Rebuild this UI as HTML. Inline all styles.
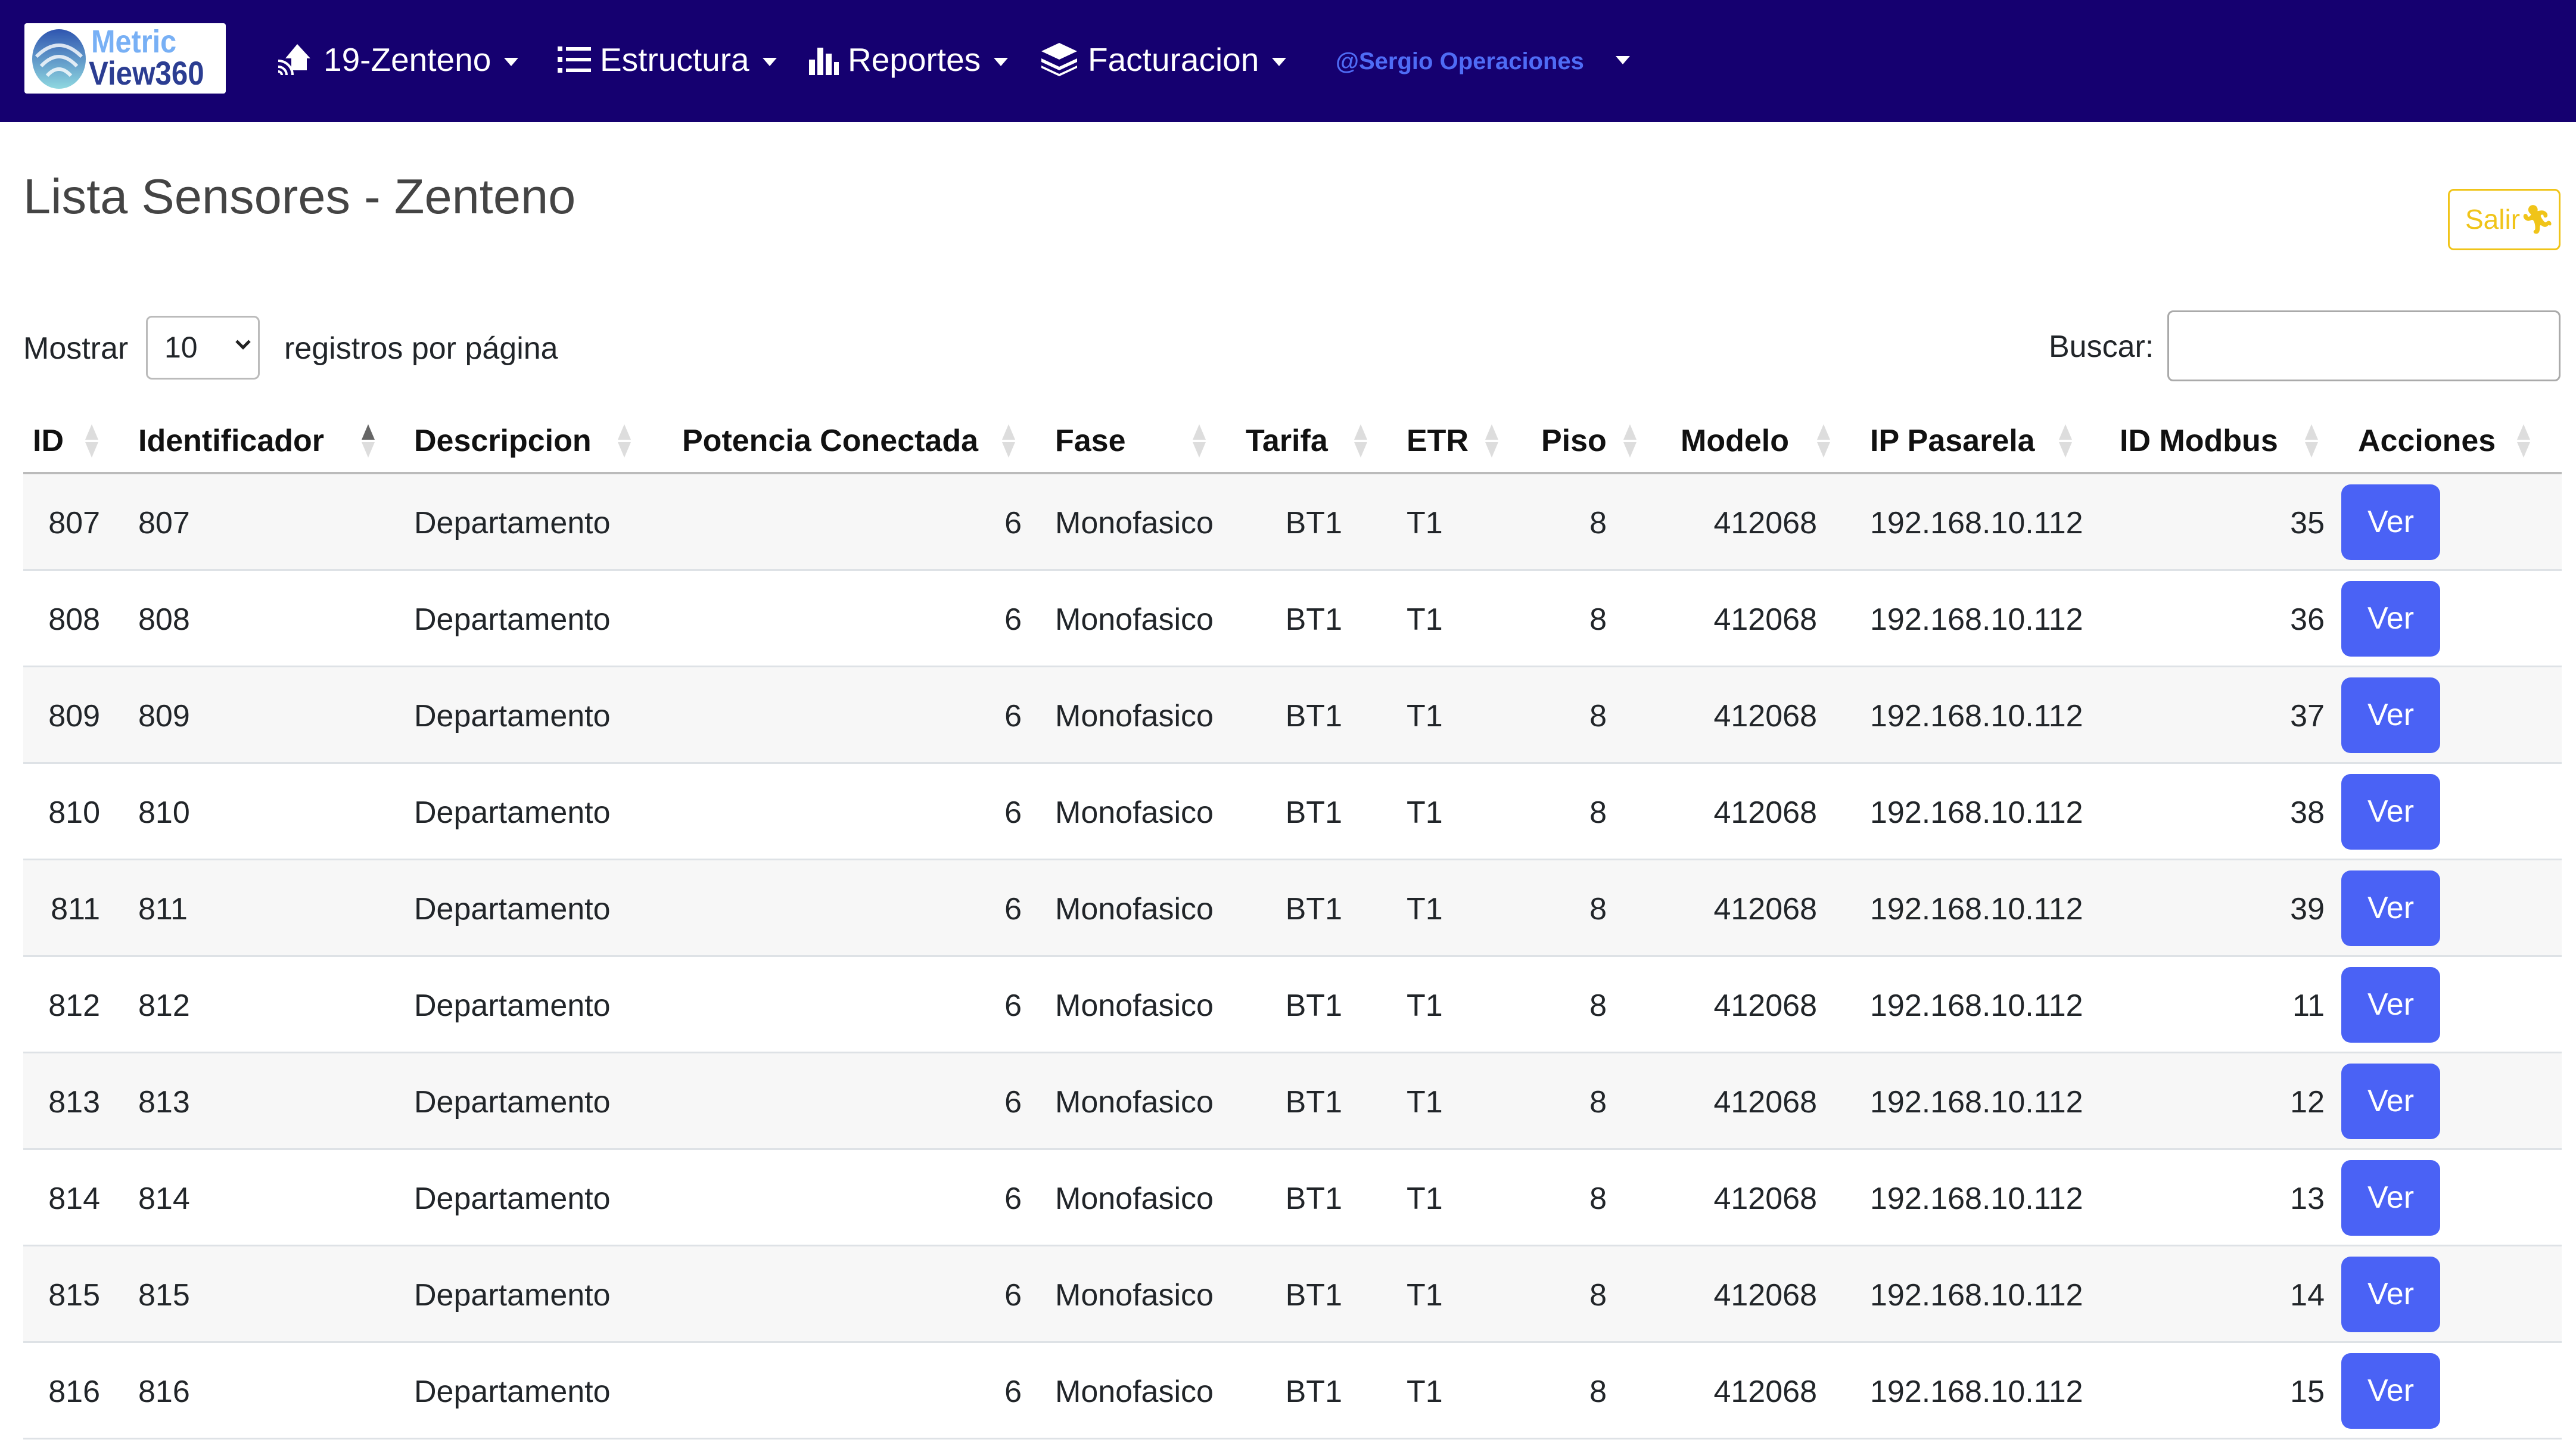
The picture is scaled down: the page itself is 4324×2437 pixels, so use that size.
<!DOCTYPE html>
<html><head><meta charset="utf-8"><style>
*{margin:0;padding:0;box-sizing:border-box}
body{width:4324px;height:2437px;background:#fff;font-family:"Liberation Sans",sans-serif;color:#212529;position:relative;overflow:hidden}
.nav{position:absolute;left:0;top:0;width:4324px;height:205px;background:#150070}
.abs{position:absolute;white-space:nowrap}
.ni{position:absolute;top:70px;color:#fff;font-size:55px;line-height:60px;white-space:nowrap}
.car{display:inline-block;width:0;height:0;border-left:12px solid transparent;border-right:12px solid transparent;border-top:14px solid #fff;vertical-align:middle;margin-left:22px}
.hd{position:absolute;top:710px;font-weight:bold;font-size:52px;line-height:60px;color:#111}
.so{position:absolute;top:712px;width:22px;height:56px}
.row{position:absolute;left:39px;width:4261px;height:162px;border-bottom:3px solid #dee2e6}
.row span{position:absolute;top:52px;font-size:52px;line-height:60px;white-space:nowrap}
.r{text-align:right}
.a{right:4132px}.b{right:2585px}.c{right:2047px}.d{right:1603px}.e{right:1250px}.f{right:398px}
.ver{position:absolute;left:3891px;top:17px;width:166px;height:127px;background:#4a62f5;border-radius:16px;color:#fff;font-size:52px;line-height:127px;text-align:center}
</style></head><body>
<div class="nav">
  <div class="abs" style="left:41px;top:39px;width:338px;height:118px;background:#fff;border-radius:4px">
    <svg width="100" height="104" style="position:absolute;left:8px;top:8px" viewBox="0 0 100 104">
      <defs><linearGradient id="g" x1="0" y1="0" x2="0" y2="1"><stop offset="0" stop-color="#2f55b0"/><stop offset="1" stop-color="#8fd8e0"/></linearGradient></defs>
      <ellipse cx="50" cy="52" rx="45" ry="50" fill="url(#g)"/>
      <path d="M12 48 Q50 10 88 48" stroke="#fff" stroke-width="6" fill="none" opacity=".8"/>
      <path d="M20 64 Q50 32 80 64" stroke="#fff" stroke-width="6" fill="none" opacity=".8"/>
      <path d="M30 80 Q50 58 70 80" stroke="#fff" stroke-width="6" fill="none" opacity=".8"/>
    </svg>
    <div class="abs" style="left:112px;top:4px;font-size:54px;font-weight:bold;color:#78b0f5;line-height:54px;transform:scaleX(.9);transform-origin:left">Metric</div>
    <div class="abs" style="left:108px;top:56px;font-size:56px;font-weight:bold;color:#2b3d92;line-height:56px;transform:scaleX(.88);transform-origin:left">View360</div>
  </div>
  <svg class="abs" style="left:463px;top:72px" width="60" height="58" viewBox="0 0 60 58"><path d="M36 2 L58 26 L52 26 L52 46 L26 46 L26 26 L16 26 Z" fill="#fff"/><path d="M4 40 A14 14 0 0 1 18 54 M4 30 A24 24 0 0 1 28 54 M4 48 A6 6 0 0 1 10 54" stroke="#fff" stroke-width="4" fill="none"/></svg>
  <div class="ni" style="left:543px">19-Zenteno<span class="car"></span></div>
  <svg class="abs" style="left:936px;top:76px" width="56" height="48" viewBox="0 0 56 48"><g fill="#fff"><rect x="0" y="2" width="8" height="8"/><rect x="0" y="20" width="8" height="8"/><rect x="0" y="38" width="8" height="8"/><rect x="14" y="3" width="42" height="6"/><rect x="14" y="21" width="42" height="6"/><rect x="14" y="39" width="42" height="6"/></g></svg>
  <div class="ni" style="left:1007px">Estructura<span class="car"></span></div>
  <svg class="abs" style="left:1358px;top:74px" width="50" height="52" viewBox="0 0 50 52"><g fill="#fff"><rect x="0" y="26" width="10" height="26"/><rect x="14" y="6" width="10" height="46"/><rect x="28" y="16" width="10" height="36"/><rect x="42" y="30" width="8" height="22"/></g></svg>
  <div class="ni" style="left:1423px">Reportes<span class="car"></span></div>
  <svg class="abs" style="left:1748px;top:72px" width="60" height="56" viewBox="0 0 60 56"><g fill="#fff"><path d="M30 0 L60 14 L30 28 L0 14Z"/><path d="M0 26 L30 40 L60 26 L60 32 L30 46 L0 32Z"/><path d="M0 38 L30 52 L60 38 L60 42 L30 56 L0 42Z"/></g></svg>
  <div class="ni" style="left:1826px">Facturacion<span class="car"></span></div>
  <div class="abs" style="left:2242px;top:78px;font-size:40px;font-weight:bold;color:#4f6cf5;line-height:50px">@Sergio Operaciones</div>
  <span class="car abs" style="left:2712px;top:94px;margin:0"></span>
</div>

<div class="abs" style="left:39px;top:282px;font-size:83px;color:#444;line-height:95px">Lista Sensores - Zenteno</div>
<div class="abs" style="left:4109px;top:317px;width:189px;height:103px;border:3px solid #f0c419;border-radius:10px;color:#f0c419;font-size:46px;line-height:97px;padding-left:26px">Salir<span style="font-weight:bold">&#x1F3C3;&#xFE0E;</span></div>

<div class="abs" style="left:39px;top:555px;font-size:52px;line-height:60px">Mostrar</div>
<div class="abs" style="left:245px;top:530px;width:191px;height:107px;border:3px solid #bbb;border-radius:10px;font-size:50px;line-height:101px;padding-left:28px">10<span style="position:absolute;right:16px;width:18px;height:18px;border-right:5px solid #222;border-bottom:5px solid #222;transform:rotate(45deg);top:32px"></span></div>
<div class="abs" style="left:477px;top:555px;font-size:52px;line-height:60px">registros por página</div>
<div class="abs" style="left:3439px;top:552px;font-size:52px;line-height:60px">Buscar:</div>
<div class="abs" style="left:3638px;top:521px;width:660px;height:119px;border:3px solid #aaa;border-radius:10px"></div>

<div class="hd" style="left:55px">ID</div>
<div class="hd" style="left:232px">Identificador</div>
<div class="hd" style="left:695px">Descripcion</div>
<div class="hd" style="left:1145px">Potencia Conectada</div>
<div class="hd" style="left:1771px">Fase</div>
<div class="hd" style="left:2091px">Tarifa</div>
<div class="hd" style="left:2361px">ETR</div>
<div class="hd" style="left:2587px">Piso</div>
<div class="hd" style="left:2821px">Modelo</div>
<div class="hd" style="left:3139px">IP Pasarela</div>
<div class="hd" style="left:3558px">ID Modbus</div>
<div class="hd" style="left:3958px">Acciones</div>

<svg width="0" height="0" style="position:absolute"><defs><g id="so"><path d="M11 0 L22 26 L0 26Z" fill="#ddd"/><path d="M11 56 L22 30 L0 30Z" fill="#ddd"/></g></defs></svg>
<svg class="so" style="left:143px"><use href="#so"/></svg>
<svg class="so" style="left:607px"><path d="M11 0 L22 26 L0 26Z" fill="#666"/><path d="M11 56 L22 30 L0 30Z" fill="#ddd"/></svg>
<svg class="so" style="left:1037px"><use href="#so"/></svg>
<svg class="so" style="left:1682px"><use href="#so"/></svg>
<svg class="so" style="left:2002px"><use href="#so"/></svg>
<svg class="so" style="left:2273px"><use href="#so"/></svg>
<svg class="so" style="left:2493px"><use href="#so"/></svg>
<svg class="so" style="left:2725px"><use href="#so"/></svg>
<svg class="so" style="left:3050px"><use href="#so"/></svg>
<svg class="so" style="left:3456px"><use href="#so"/></svg>
<svg class="so" style="left:3869px"><use href="#so"/></svg>
<svg class="so" style="left:4225px"><use href="#so"/></svg>
<div class="abs" style="left:39px;top:792px;width:4261px;height:4px;background:#bbb"></div>

<div class="row" style="top:796px;background:#f7f7f7"><span class="r a">807</span><span style="left:193px">807</span><span style="left:656px">Departamento</span><span class="r b">6</span><span style="left:1732px">Monofasico</span><span class="r c">BT1</span><span style="left:2322px">T1</span><span class="r d">8</span><span class="r e">412068</span><span style="left:3100px">192.168.10.112</span><span class="r f">35</span><div class="ver">Ver</div></div>
<div class="row" style="top:958px"><span class="r a">808</span><span style="left:193px">808</span><span style="left:656px">Departamento</span><span class="r b">6</span><span style="left:1732px">Monofasico</span><span class="r c">BT1</span><span style="left:2322px">T1</span><span class="r d">8</span><span class="r e">412068</span><span style="left:3100px">192.168.10.112</span><span class="r f">36</span><div class="ver">Ver</div></div>
<div class="row" style="top:1120px;background:#f7f7f7"><span class="r a">809</span><span style="left:193px">809</span><span style="left:656px">Departamento</span><span class="r b">6</span><span style="left:1732px">Monofasico</span><span class="r c">BT1</span><span style="left:2322px">T1</span><span class="r d">8</span><span class="r e">412068</span><span style="left:3100px">192.168.10.112</span><span class="r f">37</span><div class="ver">Ver</div></div>
<div class="row" style="top:1282px"><span class="r a">810</span><span style="left:193px">810</span><span style="left:656px">Departamento</span><span class="r b">6</span><span style="left:1732px">Monofasico</span><span class="r c">BT1</span><span style="left:2322px">T1</span><span class="r d">8</span><span class="r e">412068</span><span style="left:3100px">192.168.10.112</span><span class="r f">38</span><div class="ver">Ver</div></div>
<div class="row" style="top:1444px;background:#f7f7f7"><span class="r a">811</span><span style="left:193px">811</span><span style="left:656px">Departamento</span><span class="r b">6</span><span style="left:1732px">Monofasico</span><span class="r c">BT1</span><span style="left:2322px">T1</span><span class="r d">8</span><span class="r e">412068</span><span style="left:3100px">192.168.10.112</span><span class="r f">39</span><div class="ver">Ver</div></div>
<div class="row" style="top:1606px"><span class="r a">812</span><span style="left:193px">812</span><span style="left:656px">Departamento</span><span class="r b">6</span><span style="left:1732px">Monofasico</span><span class="r c">BT1</span><span style="left:2322px">T1</span><span class="r d">8</span><span class="r e">412068</span><span style="left:3100px">192.168.10.112</span><span class="r f">11</span><div class="ver">Ver</div></div>
<div class="row" style="top:1768px;background:#f7f7f7"><span class="r a">813</span><span style="left:193px">813</span><span style="left:656px">Departamento</span><span class="r b">6</span><span style="left:1732px">Monofasico</span><span class="r c">BT1</span><span style="left:2322px">T1</span><span class="r d">8</span><span class="r e">412068</span><span style="left:3100px">192.168.10.112</span><span class="r f">12</span><div class="ver">Ver</div></div>
<div class="row" style="top:1930px"><span class="r a">814</span><span style="left:193px">814</span><span style="left:656px">Departamento</span><span class="r b">6</span><span style="left:1732px">Monofasico</span><span class="r c">BT1</span><span style="left:2322px">T1</span><span class="r d">8</span><span class="r e">412068</span><span style="left:3100px">192.168.10.112</span><span class="r f">13</span><div class="ver">Ver</div></div>
<div class="row" style="top:2092px;background:#f7f7f7"><span class="r a">815</span><span style="left:193px">815</span><span style="left:656px">Departamento</span><span class="r b">6</span><span style="left:1732px">Monofasico</span><span class="r c">BT1</span><span style="left:2322px">T1</span><span class="r d">8</span><span class="r e">412068</span><span style="left:3100px">192.168.10.112</span><span class="r f">14</span><div class="ver">Ver</div></div>
<div class="row" style="top:2254px"><span class="r a">816</span><span style="left:193px">816</span><span style="left:656px">Departamento</span><span class="r b">6</span><span style="left:1732px">Monofasico</span><span class="r c">BT1</span><span style="left:2322px">T1</span><span class="r d">8</span><span class="r e">412068</span><span style="left:3100px">192.168.10.112</span><span class="r f">15</span><div class="ver">Ver</div></div>
</body></html>
